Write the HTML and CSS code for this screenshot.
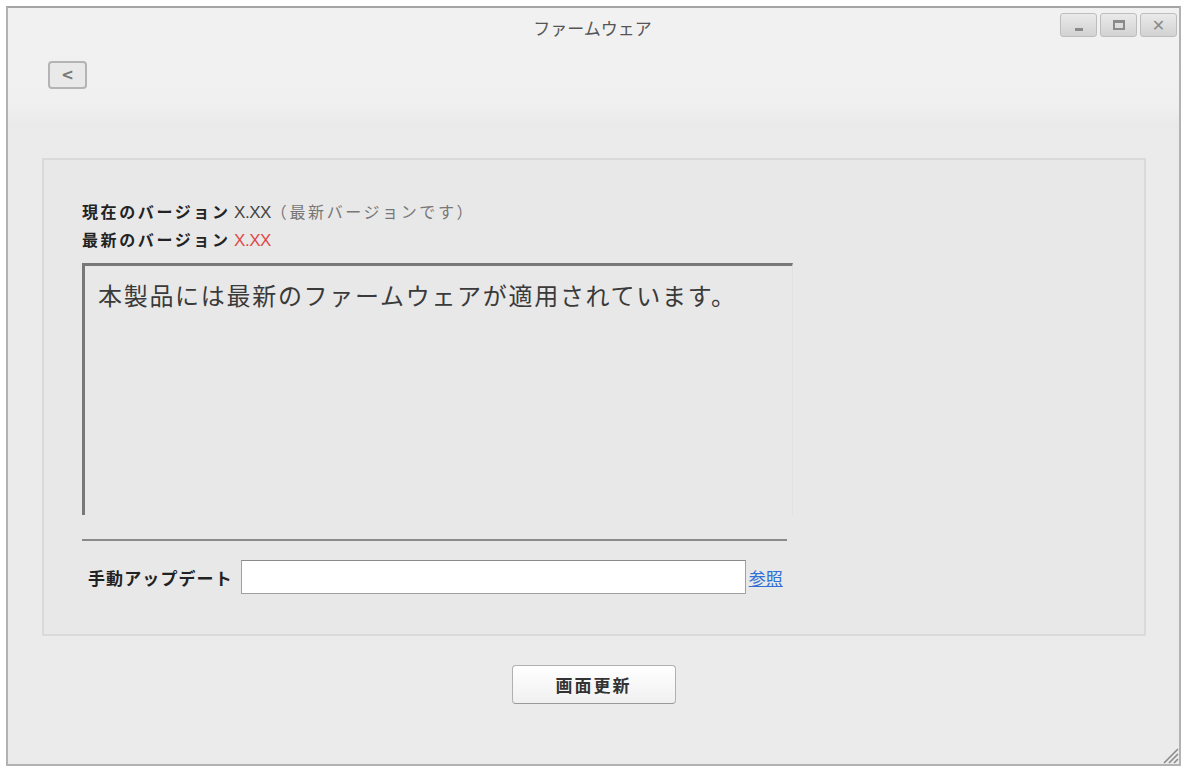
FILE: index.html
```html
<!DOCTYPE html>
<html lang="ja">
<head>
    <meta charset="UTF-8">
    <title>ファームウェア</title>
    <link rel="stylesheet" href="styles.css">
</head>
<body>
    <div class="window">
        <div class="header">
            <div class="titlebar">
                <span></span>
                <span class="title">ファームウェア</span>
                <div class="win-buttons">
                    <span class="win-btn"><span class="min-mark"></span></span>
                    <span class="win-btn"><span class="max-mark"></span></span>
                    <span class="win-btn close">&#x2715;</span>
                </div>
            </div>
            <div class="toolbar">
                <button class="back-btn">&lt;</button>
            </div>
        </div>

        <div class="panel">
            <p class="version-line"><b>現在のバージョン</b> <span class="ver">X.XX</span><span class="note">（最新バージョンです）</span></p>
            <p class="version-line"><b>最新のバージョン</b> <span class="ver latest">X.XX</span></p>

            <div class="message">本製品には最新のファームウェアが適用されています。</div>
            <div class="separator"></div>

            <div class="update-row">
                <span class="update-label">手動アップデート</span>
                <input type="text" class="file-input">
                <a href="#" class="browse">参照</a>
            </div>
        </div>

        <div class="actions">
            <button class="refresh-btn">画面更新</button>
        </div>

        <!-- つまみ -->
        <svg class="grip" width="18" height="18" viewBox="0 0 18 18">
            <path d="M17 3 L3 17 M17 8 L8 17 M17 13 L13 17" stroke="#8c8c8c" stroke-width="1.6"/>
        </svg>
    </div>
</body>
</html>
```

FILE: styles.css
```css
* {
    margin: 0;
    padding: 0;
    box-sizing: border-box;
}
body {
    background: #fff;
    font-family: "Noto Sans CJK JP", "Noto Sans", sans-serif;
    color: #333;
}
.window {
    position: relative;
    margin: 6px 0 0 6px;
    width: 1175px;
    height: 760px;
    border: 2px solid #b2b2b2;
    border-top-color: #a4a4a4;
    background: #ebebeb;
    display: flex;
    flex-direction: column;
}
.header {
    height: 120px;
    background: linear-gradient(to bottom, #f1f1f1 0%, #f0f0f0 80%, #e9e9e9 100%);
}
.titlebar {
    display: grid;
    grid-template-columns: 1fr auto 1fr;
    align-items: start;
    height: 40px;
    padding: 5px 2px 0 0;
}
.title {
    font-size: 17px;
    color: #555;
    line-height: 26px;
    margin-top: 2px;
}
.win-buttons {
    display: flex;
    justify-content: flex-end;
    gap: 3px;
}
.win-btn {
    width: 37px;
    height: 24px;
    border: 1px solid #bdbdbd;
    border-radius: 3px;
    background: linear-gradient(to bottom, #eaeaea, #d2d2d2);
    display: flex;
    align-items: center;
    justify-content: center;
    color: #8a8a8a;
    font-size: 16px;
    font-weight: bold;
    font-family: "DejaVu Sans", sans-serif;
}
.min-mark {
    width: 8px;
    height: 3px;
    background: #8a8a8a;
    margin-top: 8px;
}
.max-mark {
    width: 12px;
    height: 10px;
    border: 2px solid #8a8a8a;
    border-top-width: 3px;
}
.toolbar {
    padding: 13px 0 0 40px;
}
.back-btn {
    width: 39px;
    height: 28px;
    border: 2px solid #b4b4b4;
    border-radius: 4px;
    background: #e9e9e9;
    color: #777;
    font-size: 15px;
    font-weight: bold;
    font-family: "DejaVu Sans", sans-serif;
}
.panel {
    margin: 30px 33px 0 34px;
    height: 478px;
    border: 2px solid #dadada;
    background: #e8e8e8;
    padding: 38px 0 0 38px;
}
.version-line {
    font-size: 16px;
    line-height: 27px;
    color: #222;
}
.version-line b {
    letter-spacing: 2.6px;
}
.ver {
    color: #444;
    font-family: "Liberation Sans", sans-serif;
    font-size: 17px;
    letter-spacing: -0.5px;
}
.latest {
    color: #e04848;
}
.note {
    color: #777;
    font-size: 16px;
    letter-spacing: 2.6px;
}
.message {
    margin-top: 9px;
    width: 711px;
    height: 252px;
    border-top: 3px solid #787878;
    border-left: 3px solid #787878;
    border-right: 1px solid #e1e1e1;
    padding: 12px 0 0 13px;
    font-size: 24px;
    line-height: 34px;
    color: #3a3a3a;
    letter-spacing: 1.7px;
}
.separator {
    margin-top: 24px;
    width: 705px;
    border-top: 2px solid #8a8a8a;
}
.update-row {
    display: flex;
    align-items: center;
    margin-top: 19px;
    padding-left: 6px;
}
.update-label {
    font-size: 17px;
    font-weight: bold;
    letter-spacing: 1.1px;
    color: #222;
    margin-right: 8px;
}
.file-input {
    width: 505px;
    height: 34px;
    border: 1px solid #a0a0a0;
    border-top-color: #8a8a8a;
    background: #fff;
}
.browse {
    margin-left: 3px;
    font-size: 17px;
    color: #2f6fd6;
    text-decoration: underline;
}
.actions {
    display: flex;
    justify-content: center;
    padding-top: 29px;
}
.refresh-btn {
    width: 164px;
    height: 39px;
    border: 1px solid #b0b0b0;
    border-bottom-color: #999;
    border-radius: 4px;
    background: linear-gradient(to bottom, #ffffff, #f0f0f0);
    font-family: "Noto Sans CJK JP", sans-serif;
    font-size: 17px;
    font-weight: bold;
    letter-spacing: 2px;
    color: #333;
}
.grip {
    position: absolute;
    right: 0;
    bottom: 0;
}
```
